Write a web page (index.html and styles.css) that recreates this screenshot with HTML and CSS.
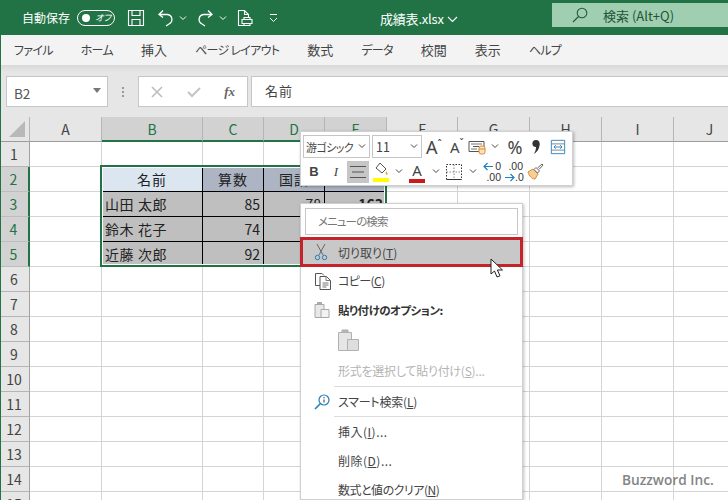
FILE: index.html
```html
<!DOCTYPE html>
<html lang="ja">
<head>
<meta charset="utf-8">
<title>成績表.xlsx</title>
<link rel="stylesheet" href="styles.css">
</head>
<body>
<div class="app">
  <header class="titlebar">
    <span class="autosave">自動保存</span>
    <span class="toggle"><i class="knob"></i><span class="off">オフ</span></span>
    <svg class="q save" width="18" height="18" viewBox="0 0 18 18" fill="none" stroke="#fff" stroke-width="1.1"><path d="M1.5 1.5h15v15h-15zM5 1.5v5h8v-5M5 16.5v-6h8v6"/></svg>
    <svg class="q undo" width="18" height="18" viewBox="0 0 18 18" fill="none" stroke="#fff" stroke-width="1.3"><path d="M6 1.500 2 5.500l4 3M2.500 5.500h8a5 5 0 0 1 1.500 9.500L9 17"/></svg>
    <svg class="q mini" width="8" height="6" viewBox="0 0 8 6" fill="none" stroke="#fff"><path d="M1 1.500l3 3 3-3"/></svg>
    <svg class="q redo" width="18" height="18" viewBox="0 0 18 18" fill="none" stroke="#fff" stroke-width="1.3"><path d="M11 1.500l4 4-4 3M14.500 5.500h-8A5 5 0 0 0 5 15l3 2"/></svg>
    <svg class="q mini" width="8" height="6" viewBox="0 0 8 6" fill="none" stroke="#fff"><path d="M1 1.500l3 3 3-3"/></svg>
    <svg class="q print" width="16" height="18" viewBox="0 0 16 18" fill="none" stroke="#fff" stroke-width="1.100"><path d="M7 16.500H1.500v-15h6l4 4v3M7.500 1.500v4h4M5 10.500h10v4H5zM7 10.500v-2h6v2M7 14.500v2h6v-2"/></svg>
    <svg class="q custom" width="9" height="10" viewBox="0 0 9 10" fill="none" stroke="#fff"><path d="M1 1.500h7"/><path d="M1 5l3.500 3.500L8 5"/></svg>
    <span class="filename">成績表.xlsx</span>
    <svg class="fcaret" width="11" height="7" viewBox="0 0 11 7" fill="none" stroke="#fff" stroke-width="1.100"><path d="M1 1l4.500 4.500L10 1"/></svg>
    <div class="search">
      <svg width="16" height="16" viewBox="0 0 16 16" fill="none" stroke="#1f5c37" stroke-width="1.100"><circle cx="10" cy="6" r="4.800"/><path d="M6.500 9.500 1 15"/></svg>
      <span>検索 (Alt+Q)</span>
    </div>
  </header>

  <nav class="tabs">
    <span>ファイル</span><span>ホーム</span><span class="k">挿入</span><span>ページ レイアウト</span><span class="k">数式</span><span>データ</span><span class="k">校閲</span><span class="k">表示</span><span>ヘルプ</span>
  </nav>

  <div class="fbar">
    <div class="namebox"><span>B2</span><i class="tri"></i></div>
    <div class="grip"><i></i><i></i><i></i></div>
    <div class="fbtns">
      <svg width="14" height="14" viewBox="0 0 14 14" stroke="#bdbdbd" stroke-width="1.600"><path d="M2 2l10 10M12 2 2 12"/></svg>
      <svg width="14" height="14" viewBox="0 0 14 14" fill="none" stroke="#c4c4c4" stroke-width="2"><path d="M1 7l4 4 8-8"/></svg>
      <em class="fx">fx</em>
    </div>
    <div class="finput">名前</div>
  </div>

  <div class="sheet">
    <table class="grid">
      <colgroup><col class="c0"><col class="ca"><col class="cb"><col class="cc"><col class="cd"><col class="ce"><col class="cf"><col class="cg"><col class="cg"><col class="cg"><col class="cg"></colgroup>
      <thead>
        <tr>
          <th class="corner"><svg width="18" height="18" viewBox="0 0 18 18"><path d="M17 1v16H1z" fill="#b8b8b8"/></svg></th>
          <th>A</th><th class="on">B</th><th class="on">C</th><th class="on">D</th><th class="on">E</th><th>F</th><th>G</th><th>H</th><th>I</th><th>J</th>
        </tr>
      </thead>
      <tbody>
        <tr><th>1</th><td></td><td></td><td></td><td></td><td></td><td></td><td></td><td></td><td></td><td></td></tr>
        <tr><th class="on">2</th><td></td><td class="active">名前</td><td class="head">算数</td><td class="head">国語</td><td class="head"></td><td></td><td></td><td></td><td></td><td></td></tr>
        <tr><th class="on">3</th><td></td><td class="data">山田 太郎</td><td class="data num">85</td><td class="data num">78</td><td class="data num total">163</td><td></td><td></td><td></td><td></td><td></td></tr>
        <tr><th class="on">4</th><td></td><td class="data">鈴木 花子</td><td class="data num">74</td><td class="data num"></td><td class="data num"></td><td></td><td></td><td></td><td></td><td></td></tr>
        <tr><th class="on">5</th><td></td><td class="data">近藤 次郎</td><td class="data num">92</td><td class="data num"></td><td class="data num"></td><td></td><td></td><td></td><td></td><td></td></tr>
        <tr><th>6</th><td></td><td></td><td></td><td></td><td></td><td></td><td></td><td></td><td></td><td></td></tr>
        <tr><th>7</th><td></td><td></td><td></td><td></td><td></td><td></td><td></td><td></td><td></td><td></td></tr>
        <tr><th>8</th><td></td><td></td><td></td><td></td><td></td><td></td><td></td><td></td><td></td><td></td></tr>
        <tr><th>9</th><td></td><td></td><td></td><td></td><td></td><td></td><td></td><td></td><td></td><td></td></tr>
        <tr><th>10</th><td></td><td></td><td></td><td></td><td></td><td></td><td></td><td></td><td></td><td></td></tr>
        <tr><th>11</th><td></td><td></td><td></td><td></td><td></td><td></td><td></td><td></td><td></td><td></td></tr>
        <tr><th>12</th><td></td><td></td><td></td><td></td><td></td><td></td><td></td><td></td><td></td><td></td></tr>
        <tr><th>13</th><td></td><td></td><td></td><td></td><td></td><td></td><td></td><td></td><td></td><td></td></tr>
        <tr><th>14</th><td></td><td></td><td></td><td></td><td></td><td></td><td></td><td></td><td></td><td></td></tr>
        <tr><th>15</th><td></td><td></td><td></td><td></td><td></td><td></td><td></td><td></td><td></td><td></td></tr>
      </tbody>
    </table>
    <div class="selection"></div>
  </div>

  <div class="minibar">
    <div class="mb-row">
      <div class="combo font"><span>游ゴシック</span><svg width="8" height="5" viewBox="0 0 8 5" fill="none" stroke="#444"><path d="M1 .5l3 3 3-3"/></svg></div>
      <div class="combo size"><span>11</span><svg width="8" height="5" viewBox="0 0 8 5" fill="none" stroke="#444"><path d="M1 .5l3 3 3-3"/></svg></div>
      <span class="grow">A<sup>ˆ</sup></span>
      <span class="shrink">A<sup>ˇ</sup></span>
      <svg class="ic" width="20" height="22" viewBox="0 0 20 22" fill="none"><path d="M2 5.500h15v10H2z" stroke="#555"/><path d="M4 8h11M4 13h6" stroke="#777"/><path d="M6 10.500h6" stroke="#555"/><rect x="12" y="10" width="6" height="8" rx="2" fill="#fbe3c0" stroke="#e08a2e"/><path d="M12 13h6" stroke="#e08a2e"/></svg>
      <svg class="cv cv-cond" width="8" height="5" viewBox="0 0 8 5" fill="none" stroke="#444"><path d="M1 .5l3 3 3-3"/></svg>
      <span class="pct">%</span>
      <svg class="ic cm" width="10" height="16" viewBox="0 0 10 16"><circle cx="5" cy="4.500" r="3.600" fill="#333"/><path d="M8.500 4.500c.3 4-1.500 8-5.500 10.500 1.500-3 2-5 2-7z" fill="#333"/></svg>
      <svg class="ic wrap" width="16" height="16" viewBox="0 0 18 18" fill="none"><path d="M1.500 1.500h15v15h-15z" stroke="#1f7fbf"/><path d="M1.500 5.500h15M1.500 12.500h15" stroke="#7a7a7a"/><path d="M4.500 9h9M6.500 7l-2 2 2 2M11.500 7l2 2-2 2" stroke="#1f7fbf"/></svg>
    </div>
    <div class="mb-row">
      <span class="bbtn bold">B</span>
      <span class="bbtn ital">I</span>
      <span class="bbtn alignon"><svg width="16" height="14" viewBox="0 0 16 14" stroke="#555"><path d="M0 1.500h16M2 7h12M0 12.500h16"/></svg></span>
      <svg class="ic fill" width="18" height="22" viewBox="0 0 18 22" fill="none"><path d="M8 2l6 6-4 4-6-5z" stroke="#555" fill="#fff"/><path d="M14 10c1 1.500 2 2.500 1.500 3.500s-2.500 0-1.500-3.500z" fill="#d9a22e"/><path d="M1 17h16v4H1z" fill="#ffff00"/></svg>
      <svg class="cv cv-fill" width="8" height="5" viewBox="0 0 8 5" fill="none" stroke="#444"><path d="M1 .5l3 3 3-3"/></svg>
      <span class="fcolor">A</span>
      <svg class="cv cv-color" width="8" height="5" viewBox="0 0 8 5" fill="none" stroke="#444"><path d="M1 .5l3 3 3-3"/></svg>
      <svg class="ic border" width="16" height="16" viewBox="0 0 16 16" fill="none" stroke="#333" stroke-dasharray="1.500 1.500"><path d="M.5.5h15v15H.5z"/><path d="M8 .5v15M.5 8h15" stroke="#888"/><path d="M.5 15.500h15" stroke-dasharray="none"/></svg>
      <svg class="cv cv-border" width="8" height="5" viewBox="0 0 8 5" fill="none" stroke="#444"><path d="M1 .5l3 3 3-3"/></svg>
      <span class="dec left"><b>0</b><b>.00</b><svg width="10" height="9" viewBox="0 0 10 9" fill="none" stroke="#1f7fbf" stroke-width="1.200"><path d="M10 4.500H1M4.500 1 1 4.500 4.500 8"/></svg></span>
      <span class="dec right"><b>.00</b><b>.0</b><svg width="10" height="9" viewBox="0 0 10 9" fill="none" stroke="#1f7fbf" stroke-width="1.200"><path d="M0 4.500h9M5.500 1 9 4.500 5.500 8"/></svg></span>
      <svg class="ic brush" width="17" height="17" viewBox="0 0 17 17" fill="none"><path d="M1 9l5-3 5 5-3 5c-3 0-6-3-7-7z" fill="#f7cf96" stroke="#dd8a2b"/><path d="M7 6.500 9 4.500l3.500 3.500-2 2z" fill="#fff" stroke="#666"/><path d="M10.500 5 15 1l1 1-4 4.500" stroke="#666"/></svg>
    </div>
  </div>

  <div class="menu">
    <div class="msearch">メニューの検索</div>
    <div class="mi cut">
      <svg class="micon" width="14" height="18" viewBox="0 0 14 18" fill="none"><path d="M3 1l6 11M11 1 5 12" stroke="#666"/><circle cx="3.500" cy="14.500" r="2.200" stroke="#1f7fbf"/><circle cx="10.500" cy="14.500" r="2.200" stroke="#1f7fbf"/></svg>
      <span>切り取り(<u>T</u>)</span>
    </div>
    <div class="mi copy">
      <svg class="micon" width="18" height="18" viewBox="0 0 18 18" fill="none" stroke="#555"><path d="M6 13.500H1.500v-12H8l2 2"/><path d="M6 4.500h6.500l4 4v9H6z" fill="#fff"/><path d="M12 4.500v4h4.500M8.500 11h6M8.500 13h6M8.500 15h4" stroke="#777"/></svg>
      <span>コピー(<u>C</u>)</span>
    </div>
    <div class="mi pastehead">
      <svg class="micon" width="16" height="16" viewBox="0 0 16 16" fill="#e8e8e8" stroke="#a8a8a8"><path d="M1 2.500h9v13H1z"/><path d="M3.500 2.500v-2h4v2z" fill="#aaa"/><path d="M7 7.500h8v8H7z" fill="#f2f2f2"/></svg>
      <strong>貼り付けのオプション:</strong>
    </div>
    <div class="mi pasteopt">
      <svg width="21" height="22" viewBox="0 0 21 22" fill="#e6e6e6" stroke="#b0b0b0"><path d="M.5 3.500h13v18H.5z"/><path d="M4 3.500V1h6v2.500z" fill="#b5b5b5"/><path d="M9.500 10.500h11v11h-11z" fill="#dedede"/></svg>
    </div>
    <div class="mi disabled"><span>形式を選択して貼り付け(<u>S</u>)...</span></div>
    <hr class="sep">
    <div class="mi smart">
      <svg class="micon" width="16" height="16" viewBox="0 0 16 16" fill="none" stroke="#1f7fbf" stroke-width="1.200"><circle cx="10" cy="6" r="5"/><path d="M6.200 9.800 1 15" stroke-width="1.600"/><path d="M10 5.500v3M10 3v1.200" stroke="#555"/></svg>
      <span>スマート検索(<u>L</u>)</span>
    </div>
    <hr class="sep">
    <div class="mi ins"><span>挿入(<u>I</u>)...</span></div>
    <div class="mi del"><span>削除(<u>D</u>)...</span></div>
    <div class="mi clr"><span>数式と値のクリア(<u>N</u>)</span></div>
  </div>

  <svg class="cursor" width="14" height="21" viewBox="0 0 14 21"><path d="M1 1v15l3.500-3 2.500 6 3-1.200-2.600-5.800H12.500z" fill="#fff" stroke="#222"/></svg>
  <div class="mark">Buzzword Inc.</div>
</div>
</body>
</html>
```

FILE: styles.css
```css
* { box-sizing: border-box; }
html, body { margin: 0; padding: 0; background: #fff; }
body {
  font-family: "Noto Sans CJK JP", "Noto Sans", sans-serif;
  font-feature-settings: "palt";
  color: #444;
}
.app {
  position: relative;
  width: 728px;
  height: 500px;
  overflow: hidden;
  display: flex;
  flex-direction: column;
  border-left: 1px solid #217346;
}

/* title bar */
.titlebar {
  flex: 0 0 35px;
  margin-left: -1px;
  background: #217346;
  color: #fff;
  display: flex;
  align-items: center;
}
.autosave { margin-left: 22px; width: 48px; font-size: 12px; line-height: 16px; font-feature-settings: normal; }
.toggle {
  margin-left: 7px;
  width: 38px;
  height: 16px;
  border: 1px solid #fff;
  border-radius: 8px;
  display: flex;
  align-items: center;
  padding: 0 3px 0 4px;
  justify-content: space-between;
}
.knob { width: 8px; height: 8px; border-radius: 50%; background: #fff; }
.off { font-size: 9px; line-height: 12px; font-style: italic; }
.q { flex: none; }
.save { margin-left: 12px; }
.undo { margin-left: 12px; }
.titlebar .mini { margin-left: 4px; }
.redo { margin-left: 10px; }
.print { margin-left: 10px; }
.custom { margin-left: 16px; }
.filename { margin-left: 102px; width: 63px; font-size: 13px; line-height: 18px; letter-spacing: -.2px; white-space: nowrap; padding-top: 3px; }
.fcaret { margin-left: 4px; margin-top: 3px; }
.search {
  margin-left: auto;
  margin-bottom: 5px;
  width: 176px;
  height: 24px;
  background: #9fcfb0;
  color: #1d5535;
  display: flex;
  align-items: center;
  padding-left: 20px;
  gap: 15px;
  font-size: 13px;
  white-space: nowrap;
}

/* ribbon tabs */
.tabs {
  flex: 0 0 30px;
  background: #f3f3f3;
  display: flex;
  align-items: center;
  padding-left: 13px;
  gap: 28px;
  font-size: 12px;
  letter-spacing: -.7px;
  line-height: 16px;
  color: #444;
  white-space: nowrap;
}
.tabs .k { font-size: 13px; letter-spacing: 0; font-feature-settings: normal; }

/* formula bar */
.fbar {
  flex: 0 0 52px;
  background: linear-gradient(#d8d8d8, #e6e6e6 7px);
  display: flex;
  padding: 11px 0 0 5px;
  align-items: flex-start;
}
.namebox, .fbtns, .finput { height: 31px; background: #fff; border: 1px solid #c6c6c6; }
.namebox {
  width: 102px;
  display: flex;
  align-items: center;
  justify-content: space-between;
  padding: 2px 6px 0 7px;
  font-size: 13.500px;
  color: #555;
}
.tri { width: 0; height: 0; border: 4px solid transparent; border-top: 5px solid #777; border-bottom: 0; margin-top: -4px; }
.grip { width: 30px; height: 31px; display: flex; flex-direction: column; align-items: center; justify-content: center; gap: 2px; }
.grip i { width: 2px; height: 2px; background: #999; }
.fbtns {
  width: 110px;
  display: flex;
  align-items: center;
  padding: 0 12px 0 11px;
  justify-content: space-between;
}
.fx { font-family: "Liberation Serif", serif; font-size: 13px; font-weight: 700; font-style: italic; color: #666; }
.finput {
  flex: 1;
  margin-left: 3px;
  border-right: 0;
  padding: 0 0 0 13px;
  font-size: 13px;
  line-height: 28px;
  letter-spacing: 1px;
  font-feature-settings: normal;
  color: #444;
}

/* worksheet */
.sheet { position: relative; flex: 1; overflow: hidden; }
.grid { table-layout: fixed; width: 745px; border-collapse: separate; border-spacing: 0; }
.c0 { width: 29px; } .ca { width: 72px; } .cb { width: 101px; } .cc, .cd { width: 61px; }
.ce { width: 62px; } .cf { width: 71px; } .cg { width: 72px; }
.grid tr { height: 25px; }
.grid th, .grid td { padding: 0; height: 25px; }
.grid th {
  background: #e6e6e6;
  border-right: 1px solid #b5b5b5;
  border-bottom: 1px solid #b5b5b5;
  font-weight: 400;
  font-size: 14px;
  line-height: 20px;
  color: #444;
  text-align: center;
}
.grid tbody th { border-right-color: #a0a0a0; padding-right: 2px; }
.grid thead th { border-bottom-color: #9c9c9c; }
.grid th.on { background: #d2d2d2; color: #217346; }
.grid thead th.on { border-bottom: 2px solid #217346; }
.grid tbody th.on { border-right: 2px solid #217346; border-bottom-color: #bdbdbd; }
.grid .corner { padding: 0 3px 0 0; text-align: right; }
.corner svg { display: block; margin-left: auto; }
.grid td {
  border-right: 1px solid #d4d4d4;
  border-bottom: 1px solid #d4d4d4;
  font-size: 14px;
  line-height: 20px;
  color: #222;
  white-space: nowrap;
  overflow: hidden;
}
.grid td.active, .grid td.head { text-align: center; border-right-color: #000; border-bottom-color: #000; letter-spacing: 1px; font-feature-settings: normal; }
.grid td.active { background: #dce6f1; }
.grid td.head { background: #adb5c4; }
.grid td.data { background: #c0bfbf; border-right-color: #000; border-bottom-color: #000; padding-left: 3px; letter-spacing: .6px; font-feature-settings: normal; }
.grid td.num { text-align: right; padding: 0 3px 0 0; letter-spacing: 0; }
.grid td.total { font-weight: 700; }
.selection {
  position: absolute;
  left: 99px;
  top: 48px;
  width: 287px;
  height: 102px;
  border: 2px solid #217346;
  box-shadow: inset 0 0 0 1px #fff;
  pointer-events: none;
}

/* mini toolbar */
.minibar {
  position: absolute;
  left: 299px;
  top: 131px;
  width: 273px;
  height: 55px;
  background: #fff;
  border: 1px solid #d0d0d0;
  box-shadow: 1px 1px 3px rgba(0,0,0,.28);
  padding: 3px 0 0 2px;
  display: flex;
  flex-direction: column;
  gap: 2px;
}
.mb-row { display: flex; align-items: center; height: 23px; }
.combo {
  height: 23px;
  border: 1px solid #c6c6c6;
  display: flex;
  align-items: center;
  justify-content: space-between;
  padding: 0 3px 0 2px;
  font-size: 11px;
  letter-spacing: -.6px;
  color: #444;
  white-space: nowrap;
}
.combo.font { width: 67px; margin-right: 2px; }
.combo.size { width: 50px; padding-left: 3px; font-size: 12.500px; letter-spacing: 0; }
.grow, .shrink { font-family: "Noto Sans", sans-serif; color: #444; line-height: 22px; text-align: left; }
.grow { font-size: 18px; width: 24px; margin-left: 4px; }
.shrink { font-size: 15px; width: 17px; }
.grow sup, .shrink sup { font-size: 10px; line-height: 0; vertical-align: 6px; }
.ic, .cv { flex: none; }
.cv-cond { margin-left: 4px; }
.pct { font-family: "Noto Sans", sans-serif; font-size: 18px; line-height: 22px; width: 20px; margin-left: 6px; text-align: center; color: #444; }
.cm { margin-left: 6px; }
.wrap { margin-left: 9px; }
.bbtn { width: 22px; height: 22px; font: 13px/22px "Liberation Sans", sans-serif; text-align: center; color: #444; flex: none; }
.bold { font-weight: 700; }
.ital { font: italic 13px/22px "Liberation Serif", serif; }
.alignon { background: #c6c6c6; display: flex; align-items: center; justify-content: center; }
.fill { margin-left: 3px; }
.cv-fill { margin-left: 5px; }
.fcolor {
  margin-left: 6px;
  width: 16px;
  height: 22px;
  font: 15px/18px "Noto Sans", sans-serif;
  text-align: center;
  border-bottom: 4px solid #d01818;
  color: #444;
  flex: none;
}
.cv-color { margin-left: 7px; }
.border { margin-left: 6px; }
.cv-border { margin-left: 7px; }
.dec {
  width: 18px;
  height: 22px;
  margin-left: 6px;
  display: grid;
  grid-template-columns: 10px 8px;
  grid-template-rows: 11px 11px;
  flex: none;
  font-size: 10.500px;
  line-height: 11px;
  font-family: "Liberation Sans", sans-serif;
  color: #333;
}
.dec b { font-weight: 400; text-align: right; }
.dec.left b:first-child { grid-column: 2; grid-row: 1; }
.dec.left b:nth-child(2) { grid-column: 1 / 3; grid-row: 2; }
.dec.left svg { grid-column: 1; grid-row: 1; align-self: center; }
.dec.right { margin-left: 4px; }
.dec.right b:first-child { grid-column: 1 / 3; grid-row: 1; }
.dec.right b:nth-child(2) { grid-column: 2; grid-row: 2; }
.dec.right svg { grid-column: 1; grid-row: 2; align-self: center; }
.brush { margin-left: 4px; }

/* context menu */
.menu {
  position: absolute;
  left: 299px;
  top: 203px;
  width: 223px;
  height: 297px;
  background: #fff;
  border: 1px solid #d0d0d0;
  box-shadow: 1px 1px 3px rgba(0,0,0,.25);
  display: flex;
  flex-direction: column;
  font-size: 12px;
  color: #444;
}
.msearch {
  flex: none;
  margin: 4px 4px 2px;
  height: 27px;
  border: 1px solid #c6c6c6;
  padding-left: 12px;
  line-height: 24px;
  color: #777;
  font-size: 11.500px;
  letter-spacing: -.9px;
}
.mi {
  flex: none;
  position: relative;
  display: flex;
  align-items: center;
  padding-left: 37px;
  height: 29px;
  white-space: nowrap;
}
.micon { position: absolute; left: 13px; top: 50%; transform: translateY(-50%); }
.cut { height: 30px; background: #c9c8c8; border: 3px solid #c4232b; padding-left: 35px; margin: 0 -1px; }
.cut .micon { left: 11px; }
.copy { height: 27px; letter-spacing: -.6px; }
.pastehead { height: 31px; }
.pastehead strong { font-weight: 700; font-size: 11.500px; letter-spacing: -.5px; color: #333; }
.pasteopt { height: 30px; }
.disabled { height: 31px; color: #b4b4b4; letter-spacing: -.25px; }
.sep { flex: none; width: 188px; height: 1px; border: 0; margin: 0 0 0 33px; background: #dcdcdc; }
.smart { letter-spacing: -.2px; }
.ins, .del { letter-spacing: .5px; }
.clr { letter-spacing: -.5px; }

/* annotation */
.cursor { position: absolute; left: 489px; top: 258px; }
.mark {
  position: absolute;
  left: 621px;
  top: 471px;
  font: 600 13.700px/18px "Open Sans", sans-serif;
  color: #858585;
  white-space: nowrap;
  font-feature-settings: normal;
}
```
